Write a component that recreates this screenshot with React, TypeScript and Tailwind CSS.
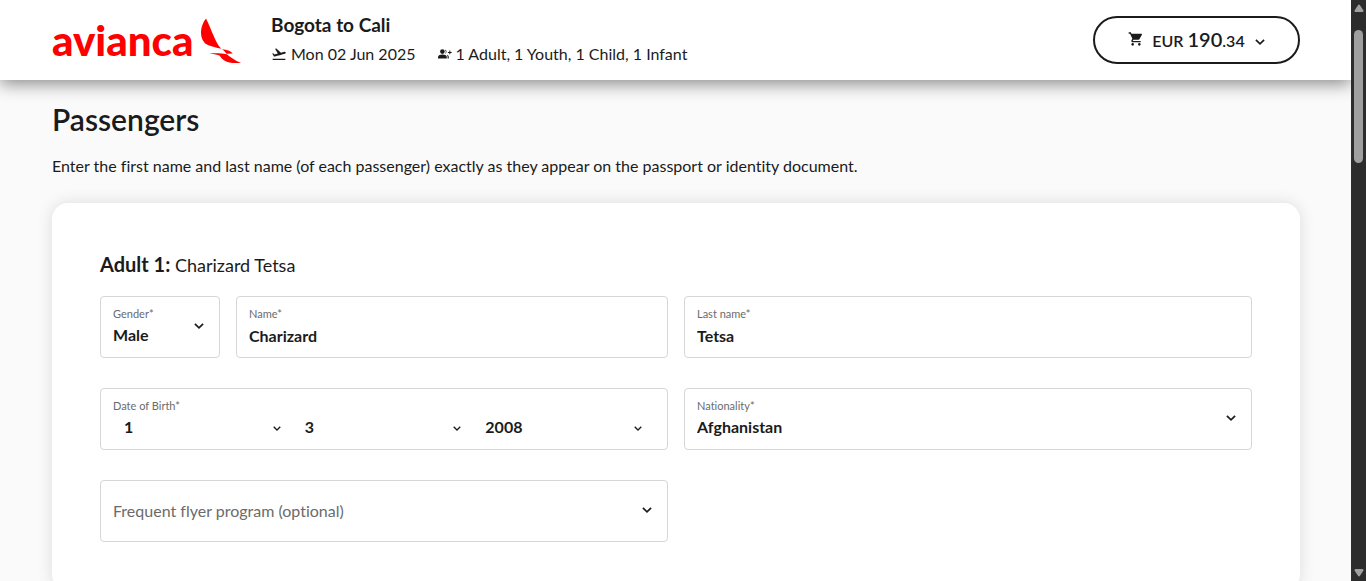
import { useId, type ReactNode } from 'react';
import { MdFlightTakeoff, MdShoppingCart } from 'react-icons/md';

function Chevron({ className = '' }: { className?: string }) {
  return (
    <svg viewBox="0 0 10 6" className={`pointer-events-none shrink-0 fill-none stroke-[#1b1b1b] ${className}`} aria-hidden="true">
      <path d="M0.9 0.9 5 4.8 9.1 0.9" strokeWidth="1.7" />
    </svg>
  );
}

function PassengersIcon() {
  return (
    <svg viewBox="0 0 14 10" className="h-[10px] w-[14px] fill-current" aria-hidden="true">
      <circle cx="4.400" cy="2.600" r="2.300" />
      <path d="M0 9.400V8C0 6.300 2.200 5.500 4.400 5.500S8.800 6.300 8.800 8V9.400Z" />
      <path d="M6.900 0.400A2.300 2.300 0 0 1 6.900 4.800 3.400 3.400 0 0 0 6.900 0.400ZM8.700 5.800C10 6.200 10.800 6.900 10.800 8V9.400H9.600V8C9.600 7.100 9.300 6.400 8.700 5.800Z" />
      <path d="M11.300 1.500H12.300V2.900H13.700V3.900H12.300V5.300H11.300V3.900H9.900V2.900H11.300Z" />
    </svg>
  );
}

function Logo() {
  return (
    <a href="#" className="flex w-[189px] shrink-0 items-center justify-between text-[#ff0000]">
      <span className="font-['Lato',sans-serif] text-[42px] leading-12 font-black">avianca</span>
      <svg viewBox="0 0 40 46" className="mt-[2px] h-[46px] w-10 fill-current" aria-hidden="true">
        <path d="M5 0.400C-1.500 8.500-1.600 20 4.200 25.400 8 28 14 29 20.400 30.800 14.500 25 11 12.500 5 0.400Z" />
        <path d="M21 31.200C26 31.600 29.500 32.600 31.800 35.400L25.500 35.800C24.600 34.200 23 32.600 21 31.200Z" />
        <path d="M8 35.400C15 35 21 35.300 25.800 36.200 30 39.600 34.500 42.800 40 44.800 26 46.200 21 41.500 18.500 37.400 15 36.200 12 35.800 8 35.400Z" />
      </svg>
    </a>
  );
}

const box = 'relative h-[62px] min-w-0 rounded-[4px] border border-[#d6d6d6] bg-white';
const labelText = 'text-[11px] leading-4 text-[#6b6b6b]';
const valueText = 'w-full appearance-none bg-transparent text-base leading-6 font-bold text-[#1b1b1b] outline-none';

function TextField({ label, value }: { label: string; value: string }) {
  const id = useId();
  return (
    <div className={`${box} flex flex-1 flex-col px-3 pt-[9px]`}>
      <label htmlFor={id} className={labelText}>{label}</label>
      <input id={id} defaultValue={value} className={`mt-[2px] ${valueText}`} />
    </div>
  );
}

function SelectField({ label, value, className = '' }: { label: string; value: string; className?: string }) {
  const id = useId();
  return (
    <div className={`${box} flex flex-col px-3 pt-[9px] ${className}`}>
      <label htmlFor={id} className={labelText}>{label}</label>
      <select id={id} defaultValue={value} className={`mt-px ${valueText}`}>
        <option>{value}</option>
      </select>
      <Chevron className="absolute top-[26px] right-[15px] h-[6px] w-[10px]" />
    </div>
  );
}

function DatePart({ name, value }: { name: string; value: string }) {
  return (
    <div className="flex flex-1 items-center pr-[13px] pl-[11px]">
      <select aria-label={name} defaultValue={value} className={valueText}>
        <option>{value}</option>
      </select>
      <Chevron className="mt-[3px] h-[5px] w-2" />
    </div>
  );
}

function Meta({ icon, children }: { icon: ReactNode; children: ReactNode }) {
  return (
    <span className="flex items-center gap-1">
      {icon}
      {children}
    </span>
  );
}

export default function App() {
  return (
    <div className="flex h-screen overflow-hidden bg-[#fafafa] font-['Lato',sans-serif] text-[#1b1b1b] [font-variant-ligatures:none]">
      <div className="flex min-w-0 flex-1 flex-col overflow-hidden">
        <header className="z-10 flex h-20 shrink-0 items-center bg-white pr-[51px] pl-[52px] shadow-[0_4px_16px_rgba(0,0,0,0.45)]">
          <Logo />
          <div className="ml-[30px] flex-1 pb-1">
            <p className="text-[19px] leading-7 font-bold">Bogota to Cali</p>
            <p className="mt-[3px] flex gap-[22px] text-base leading-6">
              <Meta icon={<MdFlightTakeoff className="size-4" />}>Mon 02 Jun 2025</Meta>
              <Meta icon={<PassengersIcon />}>1 Adult, 1 Youth, 1 Child, 1 Infant</Meta>
            </p>
          </div>
          <button className="flex h-12 w-[207px] items-center justify-center rounded-full border-2 border-[#1b1b1b]">
            <MdShoppingCart className="mr-2 mb-[3px] size-4" />
            <span className="pb-[2px] text-base leading-6 font-semibold">
              EUR <span className="text-xl">190</span>.34
            </span>
            <Chevron className="mt-1 ml-[10px] h-[6px] w-[10px]" />
          </button>
        </header>

        <main className="pr-[51px] pl-[52px] pt-[19px]">
          <h1 className="text-[30px] leading-10 font-semibold">Passengers</h1>
          <p className="mt-[15px] text-base leading-6">
            Enter the first name and last name (of each passenger) exactly as they appear on the passport or identity document.
          </p>
          <section className="mt-[25px] rounded-2xl bg-white px-12 pt-[47px] pb-12 shadow-[0_0_16px_rgba(0,0,0,0.12)]">
            <h2 className="text-lg leading-7">
              <span className="text-xl font-bold">Adult 1:</span> Charizard Tetsa
            </h2>
            <form className="mt-[17px] grid grid-cols-2 gap-x-4 gap-y-[30px]">
              <div className="flex gap-4">
                <SelectField label="Gender*" value="Male" className="w-[120px]" />
                <TextField label="Name*" value="Charizard" />
              </div>
              <TextField label="Last name*" value="Tetsa" />
              <fieldset className={`${box} px-3`}>
                <legend className={`${labelText} float-left w-full pt-[9px]`}>Date of Birth*</legend>
                <div className="clear-both flex pt-px">
                  <DatePart name="Day" value="1" />
                  <DatePart name="Month" value="3" />
                  <DatePart name="Year" value="2008" />
                </div>
              </fieldset>
              <SelectField label="Nationality*" value="Afghanistan" />
              <div className={`${box} flex items-center px-3`}>
                <select aria-label="Frequent flyer program (optional)" className="w-full appearance-none bg-transparent text-base leading-6 text-[#6b6b6b] outline-none">
                  <option>Frequent flyer program (optional)</option>
                </select>
                <Chevron className="absolute top-[26px] right-[15px] h-[6px] w-[10px]" />
              </div>
            </form>
          </section>
        </main>
      </div>

      <div className="flex w-[15px] shrink-0 flex-col items-center bg-[#2c2c2c] py-1" aria-hidden="true">
        <svg viewBox="0 0 10 8" className="h-2 w-[10px] fill-[#9f9f9f]">
          <path d="M5 0.500Q5.600 0.500 6 1.200L9.500 6.500Q9.800 8 8.500 8H1.500Q0.200 8 0.500 6.500L4 1.200Q4.400 0.500 5 0.500Z" />
        </svg>
        <div className="mt-[18px] h-[133px] w-[9px] rounded-full bg-[#9f9f9f]" />
        <svg viewBox="0 0 10 8" className="mt-auto h-2 w-[10px] rotate-180 fill-[#9f9f9f]">
          <path d="M5 0.500Q5.600 0.500 6 1.200L9.500 6.500Q9.800 8 8.500 8H1.500Q0.200 8 0.500 6.500L4 1.200Q4.400 0.500 5 0.500Z" />
        </svg>
      </div>
    </div>
  );
}
